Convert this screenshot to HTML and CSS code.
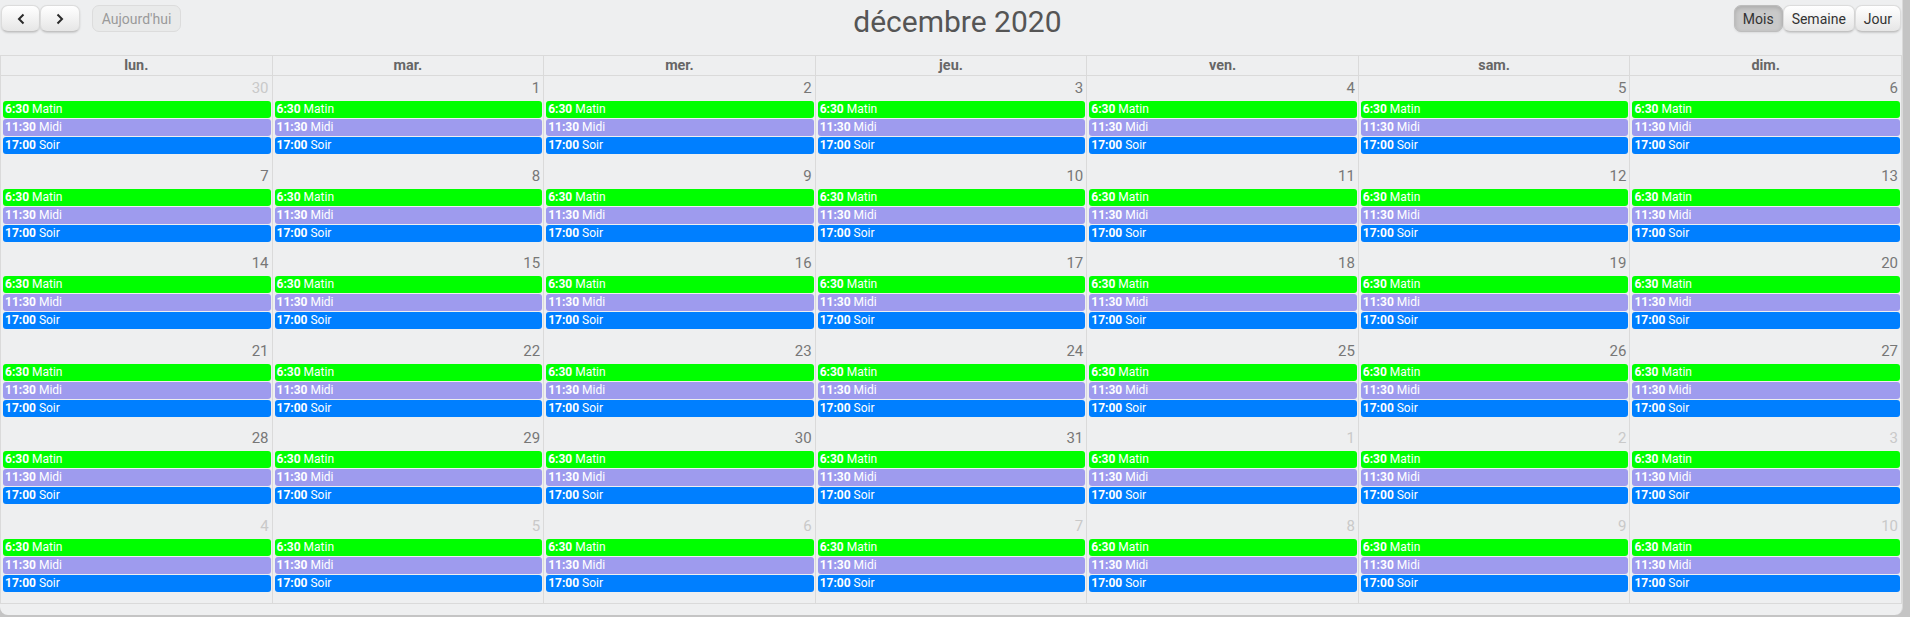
FILE: index.html
```html
<!DOCTYPE html>
<html lang="fr">
<head>
    <meta charset="UTF-8">
    <meta name="viewport" content="width=device-width, initial-scale=1.0">
    <title>Planning - décembre 2020</title>
    <link rel="stylesheet" href="styles.css">
</head>
<body>
    <div class="window">
        <!-- Barre d'outils du calendrier -->
        <div class="toolbar">
            <div class="toolbar-left">
                <div class="btn-group">
                    <button class="btn btn-prev" type="button" aria-label="précédent">
                        <svg width="10" height="12" viewBox="0 0 10 12"><polyline points="7.5,1.5 3,6 7.5,10.5" fill="none" stroke="#2b2b2b" stroke-width="2"/></svg>
                    </button>
                    <button class="btn btn-next" type="button" aria-label="suivant">
                        <svg width="10" height="12" viewBox="0 0 10 12"><polyline points="2.5,1.5 7,6 2.5,10.5" fill="none" stroke="#2b2b2b" stroke-width="2"/></svg>
                    </button>
                </div>
                <button class="btn btn-today" type="button" disabled>Aujourd'hui</button>
            </div>
            <h2 class="title">décembre 2020</h2>
            <div class="btn-group">
                <button class="btn active" type="button">Mois</button>
                <button class="btn" type="button">Semaine</button>
                <button class="btn" type="button">Jour</button>
            </div>
        </div>

        <!-- Grille du mois -->
        <div class="calendar">
            <div class="head">
                <div class="head-cell">lun.</div>
                <div class="head-cell">mar.</div>
                <div class="head-cell">mer.</div>
                <div class="head-cell">jeu.</div>
                <div class="head-cell">ven.</div>
                <div class="head-cell">sam.</div>
                <div class="head-cell">dim.</div>
            </div>
            <div class="weeks" id="weeks"></div>
        </div>
    </div>

    <script>
        // Construction des semaines : 30 novembre -> 10 janvier
        const weeks = document.getElementById("weeks");
        const events = [
            { cls: "matin", time: "6:30", label: "Matin" },
            { cls: "midi", time: "11:30", label: "Midi" },
            { cls: "soir", time: "17:00", label: "Soir" }
        ];

        let day = 30;
        let month = 11;
        for (let w = 0; w < 6; w++) {
            const week = document.createElement("div");
            week.className = "week";
            for (let d = 0; d < 7; d++) {
                const cell = document.createElement("div");
                cell.className = "day" + (month !== 12 ? " other" : "");
                let html = '<div class="day-num">' + day + '</div>';
                events.forEach(function(ev) {
                    html += '<div class="event ' + ev.cls + '"><b>' + ev.time + '</b> ' + ev.label + '</div>';
                });
                cell.innerHTML = html;
                week.appendChild(cell);

                day++;
                if (month === 11 && day > 30) { day = 1; month = 12; }
                else if (month === 12 && day > 31) { day = 1; month = 1; }
            }
            weeks.appendChild(week);
        }
    </script>
</body>
</html>
```

FILE: styles.css
```css
body {
    margin: 0;
    background-color: #c4c4c4;
    font-family: Roboto, "Liberation Sans", sans-serif;
}
.window {
    width: 1903px;
    height: 615px;
    box-sizing: border-box;
    padding-top: 5px;
    background-color: #eeeff0;
    border-right: 1px solid #dadada;
    border-radius: 0 0 8px 8px;
    overflow: hidden;
}

/* Barre d'outils */
.toolbar {
    display: flex;
    justify-content: space-between;
    align-items: flex-start;
    height: 27px;
    margin: 0 1px 23px 1px;
}
.toolbar-left {
    display: flex;
}
.btn-group {
    display: flex;
}
.btn {
    height: 27px;
    padding: 0 8px;
    font-family: Roboto, "Liberation Sans", sans-serif;
    font-size: 14px;
    color: #333;
    background-color: #f3f3f3;
    background-image: linear-gradient(to bottom, #ffffff, #e6e6e6);
    border: 1px solid #dcdcdc;
    border-bottom-color: #c2c2c2;
    border-radius: 7px;
    box-shadow: inset 0 1px 0 rgba(255, 255, 255, .3), 0 1px 2px rgba(0, 0, 0, .15);
    cursor: pointer;
}
.btn-prev {
    width: 39px;
}
.btn-next {
    width: 40px;
}
.btn svg {
    display: block;
    margin: 1px auto 0;
}
.btn-today {
    width: 89px;
    margin-left: 12px;
    color: #9a9a9a;
    background-image: none;
    background-color: #e9eaea;
    border-color: #dcdcdc;
    box-shadow: none;
    cursor: default;
}
.btn.active {
    background-image: none;
    background-color: #c9c9c9;
    border-color: #bdbdbd;
    box-shadow: inset 0 2px 4px rgba(0, 0, 0, .15), 0 1px 2px rgba(0, 0, 0, .08);
}
.title {
    margin: 0;
    font-size: 30px;
    font-weight: 400;
    line-height: 34px;
    color: #555;
}

/* Grille */
.calendar {
    width: 1902px;
}
.head {
    display: grid;
    grid-template-columns: repeat(7, 1fr);
    border-top: 1px solid #dadada;
    border-bottom: 1px solid #dadada;
    border-left: 1px solid #dadada;
}
.head-cell {
    height: 19px;
    line-height: 19px;
    text-align: center;
    font-size: 14.4px;
    font-weight: bold;
    color: #666;
    border-right: 1px solid #dadada;
}
.weeks {
    display: grid;
    grid-template-rows: repeat(5, 87.6px) 1fr;
    height: 527px;
    border-left: 1px solid #dadada;
    border-bottom: 1px solid #dadada;
}
.week {
    display: grid;
    grid-template-columns: repeat(7, 1fr);
}
.day {
    border-right: 1px solid #dadada;
    min-width: 0;
}
.day-num {
    height: 20px;
    padding: 2px 3px 3px 0;
    text-align: right;
    font-size: 15px;
    line-height: 20px;
    color: #777;
}
.other .day-num {
    color: #c9c9c9;
}
.event {
    height: 17px;
    margin: 0 1px 1px 2px;
    padding-left: 2px;
    border-radius: 3px;
    font-size: 12px;
    line-height: 17px;
    color: #fff;
    white-space: nowrap;
    overflow: hidden;
}
.event b {
    font-weight: 700;
}
.matin {
    background-color: #00ff00;
}
.midi {
    background-color: #9e9bee;
}
.soir {
    background-color: #007fff;
}
```
